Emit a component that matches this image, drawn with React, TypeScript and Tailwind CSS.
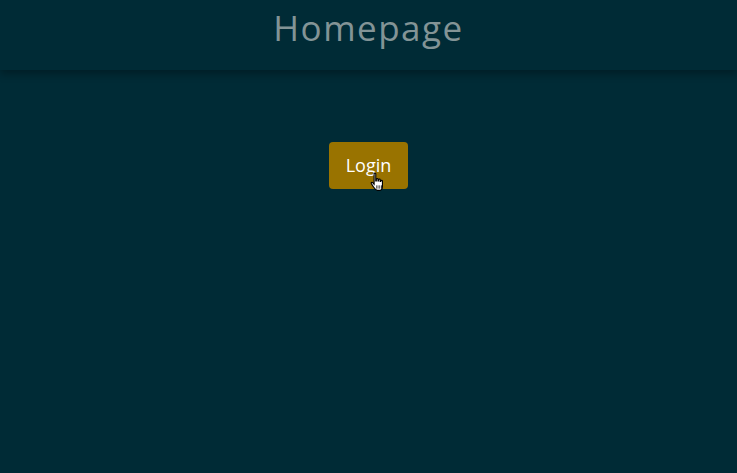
import { useState } from "react";

function HandCursor() {
  return (
    <svg width="16" height="20" viewBox="0 0 14 18" className="pointer-events-none absolute left-[41px] top-[30px]">
      <path
        d="M3.5 1.5c0-.8 1.5-.8 1.5 0V8h.5V6.5c0-.8 1.5-.8 1.5 0V8h.5V7c0-.8 1.5-.8 1.5 0v1.5h.5V8c0-.8 1.5-.8 1.5 0v5c0 2-1 3.5-3 3.5H6.5C5 16.5 4 15 3 13.5L1 10.5c-.5-.8.5-1.6 1.2-.9L3.5 11z"
        fill="#fff"
        stroke="#000"
        strokeWidth="1"
      />
      <path d="M6 12v3M8 12v3M10 12v3" stroke="#000" strokeWidth="0.8" />
    </svg>
  );
}

export default function App() {
  const [clicked, setClicked] = useState(false);

  return (
    <div className="flex h-[473px] w-[737px] flex-col bg-[#002b36] font-['Open_Sans',sans-serif]">
      {/* Cabeçalho */}
      <header className="relative z-10 flex h-[70px] items-start justify-center bg-[#002b36] shadow-[0_4px_8px_rgba(0,0,0,0.3)]">
        <h1 className="mt-[5px] text-[35px] leading-[46px] tracking-[1.5px] text-[#839496]">
          Homepage
        </h1>
      </header>

      <main className="flex flex-1 justify-center pt-[72px]">
        <div className="relative h-[47px]">
          <button
            type="button"
            onClick={() => setClicked(!clicked)}
            className="h-[47px] w-[79px] rounded-[4px] bg-[#997300] text-[18px] text-white"
          >
            Login
          </button>
          <HandCursor />
        </div>
      </main>
    </div>
  );
}
